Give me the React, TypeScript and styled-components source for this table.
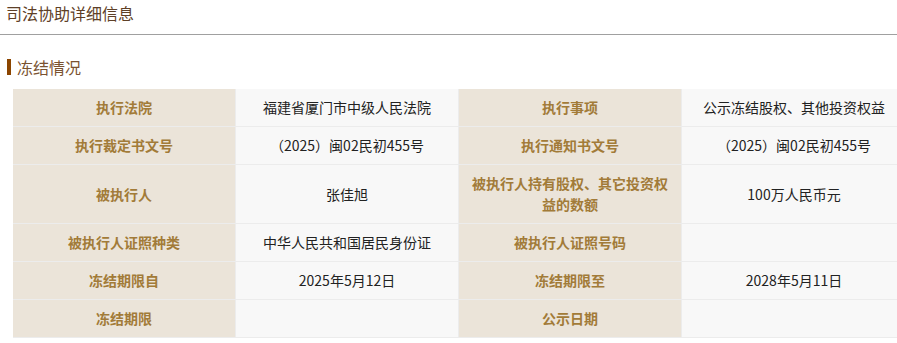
import React from "react";
import styled, { createGlobalStyle } from "styled-components";

const GlobalStyle = createGlobalStyle`
  body {
    margin: 0;
    background: #ffffff;
    font-family: "Noto Sans CJK SC", "Noto Sans", sans-serif;
  }
`;

const Page = styled.div`
  width: 897px;
  overflow: hidden;
`;

const TitleBar = styled.div`
  height: 26px;
  padding: 0 0 8px 6px;
  display: flex;
  align-items: center;
  font-size: 16px;
  color: #5e4027;
  border-bottom: 1px solid #a0a0a0;
`;

const Section = styled.div`
  padding: 22px 0 0 7px;
`;

const SectionHead = styled.div`
  display: flex;
  align-items: center;
  gap: 6px;
  font-size: 16px;
  color: #7a5230;
  height: 20px;
  &::before {
    content: "";
    width: 4px;
    height: 16px;
    background: #8b4500;
  }
`;

const Table = styled.div`
  margin: 12px 0 0 6px;
  width: 890px;
  display: grid;
  grid-template-columns: 222px 222px 222px 224px;
  gap: 1px;
  background: #ececec;
  border-bottom: 1px solid #ececec;
`;

const Cell = styled.div<{ $label?: boolean; $tall?: boolean }>`
  min-height: ${(p) => (p.$tall ? 58 : 37)}px;
  padding: 0 7px;
  display: flex;
  align-items: center;
  justify-content: center;
  text-align: center;
  font-size: 14px;
  line-height: 21px;
  background: ${(p) => (p.$label ? "#ebe4d9" : "#f8f8f8")};
  color: ${(p) => (p.$label ? "#a27b38" : "#222222")};
  font-weight: ${(p) => (p.$label ? 700 : 400)};
`;

const rows: [string, string, string, string][] = [
  ["执行法院", "福建省厦门市中级人民法院", "执行事项", "公示冻结股权、其他投资权益"],
  ["执行裁定书文号", "（2025）闽02民初455号", "执行通知书文号", "（2025）闽02民初455号"],
  ["被执行人", "张佳旭", "被执行人持有股权、其它投资权益的数额", "100万人民币元"],
  ["被执行人证照种类", "中华人民共和国居民身份证", "被执行人证照号码", ""],
  ["冻结期限自", "2025年5月12日", "冻结期限至", "2028年5月11日"],
  ["冻结期限", "", "公示日期", ""],
];

const App = () => {
  return (
    <Page>
      <GlobalStyle />
      <TitleBar>司法协助详细信息</TitleBar>
      <Section>
        <SectionHead>冻结情况</SectionHead>
        <Table>
          {rows.map((r, i) => {
            const tall = i === 2;
            return (
              <React.Fragment key={i}>
                <Cell $label $tall={tall}>{r[0]}</Cell>
                <Cell $tall={tall}>{r[1]}</Cell>
                <Cell $label $tall={tall}>{r[2]}</Cell>
                <Cell $tall={tall}>{r[3]}</Cell>
              </React.Fragment>
            );
          })}
        </Table>
      </Section>
    </Page>
  );
};

export default App;
